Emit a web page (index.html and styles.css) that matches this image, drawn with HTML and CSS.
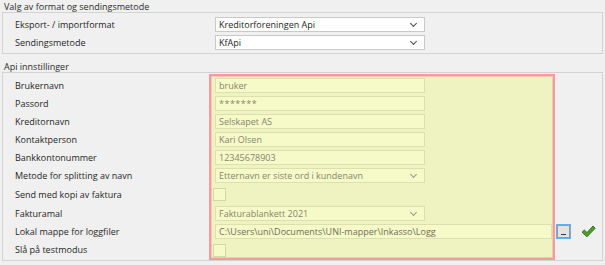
FILE: index.html
```html
<!DOCTYPE html>
<html>
  <head>
    <title>Inkasso innstillinger</title>
    <link rel="stylesheet" href="styles.css">
  </head>
  <body>
    <div class="page">
      <div class="section">
        <div class="section-title">Valg av format og sendingsmetode</div>
        <div class="group format">
          <div class="row">
            <span class="label">Eksport- / importformat</span>
            <div class="select">Kreditorforeningen Api<span class="chev"></span></div>
          </div>
          <div class="row">
            <span class="label">Sendingsmetode</span>
            <div class="select">KfApi<span class="chev"></span></div>
          </div>
        </div>
      </div>

      <div class="section api">
        <div class="section-title">Api innstillinger</div>
        <div class="group api-box">
          <div class="labels">
            <div class="lbl">Brukernavn</div>
            <div class="lbl">Passord</div>
            <div class="lbl">Kreditornavn</div>
            <div class="lbl">Kontaktperson</div>
            <div class="lbl">Bankkontonummer</div>
            <div class="lbl">Metode for splitting av navn</div>
            <div class="lbl tall">Send med kopi av faktura</div>
            <div class="lbl">Fakturamal</div>
            <div class="lbl">Lokal mappe for loggfiler</div>
            <div class="lbl last">Slå på testmodus</div>
          </div>
          <div class="highlight">
            <div class="field">bruker</div>
            <div class="field secret">*******</div>
            <div class="field">Selskapet AS</div>
            <div class="field">Kari Olsen</div>
            <div class="field">12345678903</div>
            <div class="field drop">Etternavn er siste ord i kundenavn<span class="chev faded"></span></div>
            <div class="check-row"><span class="checkbox"></span></div>
            <div class="field drop">Fakturablankett 2021<span class="chev faded"></span></div>
            <div class="field wide">C:\Users\uni\Documents\UNI-mapper\Inkasso\Logg</div>
            <div class="check-row last"><span class="checkbox"></span></div>
          </div>
          <div class="side">
            <div class="browse"><span class="dash"></span></div>
            <svg class="ok" width="15" height="13" viewBox="0 0 15 13">
              <path d="M1 7.2 L3.4 5 L6 7.6 L12 1 L14.2 3.2 L6 11.8 Z" fill="#4ea02e" stroke="#2f6a1a" stroke-width="0.9" stroke-linejoin="round"/>
            </svg>
          </div>
        </div>
      </div>
    </div>
  </body>
</html>
```

FILE: styles.css
```css
body {
  margin: 0;
  background: #f0f0f0;
  font-family: "Open Sans", "Noto Sans", sans-serif;
  font-size: 9px;
  color: #262626;
}
.page {
  display: flex;
  flex-direction: column;
  padding: 0 2px;
}
.section-title {
  height: 12px;
  line-height: 13px;
  padding-left: 2px;
  color: #2b2b2b;
}
.group {
  border: 1px solid #d3d3d3;
}
.format {
  display: flex;
  flex-direction: column;
  gap: 3px;
  padding: 4px 0 3px 12px;
}
.row {
  display: flex;
  align-items: center;
}
.row .label {
  width: 200px;
}
.select {
  display: flex;
  align-items: center;
  justify-content: space-between;
  box-sizing: border-box;
  width: 210px;
  height: 15px;
  padding: 0 8px 0 3px;
  background: #ffffff;
  border: 1px solid #c9c9c9;
  color: #1e1e1e;
}
.chev {
  width: 4px;
  height: 4px;
  border-right: 1.5px solid #4a4a4a;
  border-bottom: 1.5px solid #4a4a4a;
  transform: translateY(-1px) rotate(45deg);
}
.chev.faded {
  border-color: #9a9a86;
}
.api {
  margin-top: 6px;
}
.api .section-title {
  height: 12px;
}
.api-box {
  display: flex;
  padding: 1px 0 0;
}
.labels {
  display: flex;
  flex-direction: column;
  width: 194px;
  padding: 4px 0 0 12px;
}
.lbl {
  height: 18px;
  line-height: 15px;
}
.lbl.tall {
  height: 20px;
  line-height: 17px;
}
.highlight {
  display: flex;
  flex-direction: column;
  width: 340px;
  padding: 2px 0 1px 2px;
  background: #eef3c1;
  border: 2px solid #f29c9c;
  box-shadow: inset 0 0 0 1px #f6c6b8;
}
.field {
  display: flex;
  align-items: center;
  justify-content: space-between;
  box-sizing: border-box;
  width: 210px;
  height: 15px;
  margin: 0 0 3px 2px;
  padding: 0 8px 0 3px;
  background: #f6f9c8;
  border: 1px solid #dcdfae;
  color: #86866c;
}
.field.secret {
  letter-spacing: 0.5px;
}
.field.wide {
  width: 337px;
  color: #6e6e58;
}
.check-row {
  height: 20px;
  padding-top: 2px;
  box-sizing: border-box;
}
.check-row.last {
  height: 15px;
}
.checkbox {
  display: block;
  width: 11px;
  height: 11px;
  background: #f6f9c8;
  border: 1px solid #d4d6a6;
}
.side {
  display: flex;
  align-items: center;
  gap: 10px;
  height: 15px;
  margin-top: 150px;
  padding-left: 1px;
}
.browse {
  display: flex;
  align-items: flex-end;
  justify-content: center;
  box-sizing: border-box;
  width: 15px;
  height: 15px;
  padding-bottom: 3px;
  background: #e3e3e3;
  border: 1px solid #6aaee8;
  box-shadow: inset 0 0 0 1px #9a9a9a;
}
.dash {
  width: 5px;
  height: 1px;
  background: #3a3a3a;
}
```
